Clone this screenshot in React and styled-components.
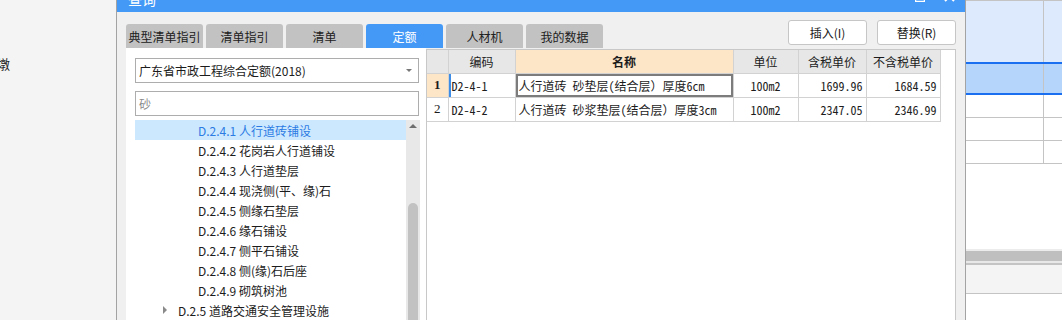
import React from "react";
import styled, { createGlobalStyle } from "styled-components";

const GlobalStyle = createGlobalStyle`
  html, body {
    margin: 0;
    padding: 0;
    width: 1062px;
    height: 320px;
    overflow: hidden;
    background: #f4f4f4;
  }
  body {
    font-family: "Noto Sans CJK SC", "Microsoft YaHei", sans-serif;
    font-size: 12px;
    color: #1c1c1c;
  }
  #root {
    height: 320px;
  }
`;

const tabs = ["典型清单指引", "清单指引", "清单", "定额", "人材机", "我的数据"];

const treeRows = [
  { code: "D.2.4.1", name: "人行道砖铺设", depth: 1, selected: true },
  { code: "D.2.4.2", name: "花岗岩人行道铺设", depth: 1 },
  { code: "D.2.4.3", name: "人行道垫层", depth: 1 },
  { code: "D.2.4.4", name: "现浇侧(平、缘)石", depth: 1 },
  { code: "D.2.4.5", name: "侧缘石垫层", depth: 1 },
  { code: "D.2.4.6", name: "缘石铺设", depth: 1 },
  { code: "D.2.4.7", name: "侧平石铺设", depth: 1 },
  { code: "D.2.4.8", name: "侧(缘)石后座", depth: 1 },
  { code: "D.2.4.9", name: "砌筑树池", depth: 1 },
  { code: "D.2.5", name: "道路交通安全管理设施", depth: 0, collapsed: true },
];

const quotaRows = [
  { no: 1, code: "D2-4-1", name: "人行道砖 砂垫层(结合层）厚度6cm", unit: "100m2", tax: "1699.96", noTax: "1684.59" },
  { no: 2, code: "D2-4-2", name: "人行道砖 砂浆垫层(结合层）厚度3cm", unit: "100m2", tax: "2347.05", noTax: "2346.99" },
];

function App() {
  return (
    <>
      <GlobalStyle />
      <Page>
        <LeftBg>
          <CutText>墩</CutText>
        </LeftBg>

        <Dialog>
          <TitleBar>
            <TitleText>查询</TitleText>
            <TitleIcons>
              <svg width="10" height="10" viewBox="0 0 10 10">
                <rect x="0.5" y="0.5" width="9" height="9" fill="none" stroke="#fff" strokeWidth="1.5" />
              </svg>
              <svg width="11" height="11" viewBox="0 0 11 11">
                <path d="M1 1 L10 10 M10 1 L1 10" stroke="#fff" strokeWidth="2" />
              </svg>
            </TitleIcons>
          </TitleBar>

          <TopRow>
            <Tabs>
              {tabs.map((t) => (
                <Tab key={t} $active={t === "定额"}>
                  {t}
                </Tab>
              ))}
            </Tabs>
            <Actions>
              <ActionButton>插入(I)</ActionButton>
              <ActionButton>替换(R)</ActionButton>
            </Actions>
          </TopRow>

          <Body>
            <LeftPanel>
              <Combo>
                <span>广东省市政工程综合定额(2018)</span>
                <ComboArrow />
              </Combo>
              <SearchBox>砂</SearchBox>
              <TreeArea>
                <TreeList>
                  {treeRows.map((r) => (
                    <TreeRow key={r.code} $depth={r.depth} $selected={r.selected}>
                      <CaretSlot>{r.collapsed && <Caret />}</CaretSlot>
                      <span>
                        {r.code} {r.name}
                      </span>
                    </TreeRow>
                  ))}
                </TreeList>
                <ScrollTrack>
                  <UpArrow />
                  <Thumb />
                </ScrollTrack>
              </TreeArea>
            </LeftPanel>

            <TablePanel>
              <QuotaTable>
                <colgroup>
                  <col style={{ width: 21 }} />
                  <col style={{ width: 67 }} />
                  <col style={{ width: 218 }} />
                  <col style={{ width: 65 }} />
                  <col style={{ width: 68 }} />
                  <col style={{ width: 74 }} />
                </colgroup>
                <thead>
                  <tr>
                    <HeadCell />
                    <HeadCell>编码</HeadCell>
                    <HeadCell $accent>名称</HeadCell>
                    <HeadCell>单位</HeadCell>
                    <HeadCell>含税单价</HeadCell>
                    <HeadCell>不含税单价</HeadCell>
                  </tr>
                </thead>
                <tbody>
                  {quotaRows.map((r) => {
                    const current = r.no === 1;
                    return (
                      <tr key={r.code}>
                        <NoCell $current={current}>{r.no}</NoCell>
                        <Cell $marker={current}>{r.code}</Cell>
                        <Cell $focus={current}>{r.name}</Cell>
                        <Cell $align="center">{r.unit}</Cell>
                        <Cell $align="right">{r.tax}</Cell>
                        <Cell $align="right">{r.noTax}</Cell>
                      </tr>
                    );
                  })}
                </tbody>
              </QuotaTable>
            </TablePanel>
          </Body>
        </Dialog>

        <RightBg>
          <Band $h={62} $bg="#dde9fc" $top>
            <BandCell $split />
            <BandCell />
          </Band>
          <Rule $c="#1a6ff0" $h={2} />
          <Band $h={29} $bg="#b6d5fb">
            <BandCell $split />
            <BandCell />
          </Band>
          <Rule $c="#1a6ff0" $h={2} />
          <Band $h={23} $bg="#fff" $line>
            <BandCell $split />
            <BandCell />
          </Band>
          <Band $h={23} $bg="#fff" $line>
            <BandCell $split />
            <BandCell />
          </Band>
          <Band $h={23} $bg="#fff" $line>
            <BandCell $split />
            <BandCell />
          </Band>
          <Band $h={85} $bg="#fff" />
          <Rule $c="#ececec" $h={2} />
          <Rule $c="#bfbfbf" $h={10} />
          <Rule $c="#e8e8e8" $h={2} />
          <Rule $c="#c4c4c4" $h={2} />
          <Band $h={29} $bg="#f4f4f4" $line />
          <Band $h={30} $bg="#fff" />
        </RightBg>
      </Page>
    </>
  );
}

const Page = styled.div`
  display: flex;
  height: 320px;
  overflow: hidden;
`;

const LeftBg = styled.div`
  width: 116px;
  flex-shrink: 0;
  background: #f4f4f4;
  padding-top: 56px;
  overflow: hidden;
`;

const CutText = styled.div`
  margin-left: -3px;
  font-size: 13px;
  line-height: 16px;
  color: #222;
`;

const Dialog = styled.div`
  width: 848px;
  flex-shrink: 0;
  display: flex;
  flex-direction: column;
  background: #f0f0f0;
  border-left: 1px solid #a3a3a3;
  border-right: 1px solid #a3a3a3;
`;

const TitleBar = styled.div`
  height: 28px;
  margin-top: -16px;
  flex-shrink: 0;
  display: flex;
  align-items: center;
  justify-content: space-between;
  padding: 0 10px 0 11px;
  background: #4499f7;
`;

const TitleText = styled.div`
  color: #fff;
  font-size: 14px;
  line-height: 16px;
  margin-top: 2px;
`;

const TitleIcons = styled.div`
  display: flex;
  align-items: center;
  gap: 19px;
  margin-top: -3px;
`;

const TopRow = styled.div`
  height: 36px;
  flex-shrink: 0;
  display: flex;
  justify-content: space-between;
  align-items: flex-end;
  padding: 0 9px;
`;

const Tabs = styled.div`
  display: flex;
  gap: 3px;
`;

const Tab = styled.div`
  width: 77px;
  height: 24px;
  display: flex;
  align-items: center;
  justify-content: center;
  border-radius: 3px 3px 0 0;
  background: ${(p) => (p.$active ? "#4499f7" : "#c2c2c2")};
  color: ${(p) => (p.$active ? "#fff" : "#202020")};
  font-size: 12px;
`;

const Actions = styled.div`
  align-self: flex-start;
  margin-top: 8px;
  display: flex;
  gap: 10px;
`;

const ActionButton = styled.button`
  width: 79px;
  height: 25px;
  padding: 0;
  background: #fff;
  border: 1px solid #c6c6c6;
  border-radius: 3px;
  font-family: inherit;
  font-size: 12px;
  color: #202020;
`;

const Body = styled.div`
  flex: 1;
  min-height: 0;
  display: flex;
  padding: 0 9px;
`;

const LeftPanel = styled.div`
  width: 300px;
  flex-shrink: 0;
  display: flex;
  flex-direction: column;
  background: #fff;
  padding: 10px 7px 0 9px;
  box-sizing: border-box;
`;

const Combo = styled.div`
  height: 25px;
  box-sizing: border-box;
  border: 1px solid #adadad;
  display: flex;
  align-items: center;
  justify-content: space-between;
  padding: 0 6px 0 3px;
  font-size: 12px;
`;

const ComboArrow = styled.div`
  width: 0;
  height: 0;
  border-left: 3px solid transparent;
  border-right: 3px solid transparent;
  border-top: 3px solid #777;
`;

const SearchBox = styled.div`
  margin-top: 8px;
  height: 25px;
  box-sizing: border-box;
  border: 1px solid #adadad;
  display: flex;
  align-items: center;
  padding-left: 3px;
  color: #8a8a8a;
  font-size: 12px;
`;

const TreeArea = styled.div`
  flex: 1;
  min-height: 0;
  margin-top: 4px;
  margin-right: -1px;
  display: flex;
`;

const TreeList = styled.div`
  flex: 1;
`;

const TreeRow = styled.div`
  height: 20px;
  display: flex;
  align-items: center;
  padding-left: ${(p) => 28 + p.$depth * 20}px;
  background: ${(p) => (p.$selected ? "#cce8ff" : "transparent")};
  color: ${(p) => (p.$selected ? "#2b7be3" : "#1c1c1c")};
  font-size: 12px;
  white-space: nowrap;
`;

const CaretSlot = styled.div`
  width: 15px;
  display: flex;
  align-items: center;
`;

const Caret = styled.div`
  width: 0;
  height: 0;
  border-top: 4px solid transparent;
  border-bottom: 4px solid transparent;
  border-left: 4px solid #8a8a8a;
`;

const ScrollTrack = styled.div`
  width: 14px;
  display: flex;
  flex-direction: column;
  align-items: center;
  background: #e8e8e8;
`;

const UpArrow = styled.div`
  margin-top: 4px;
  width: 0;
  height: 0;
  border-left: 4px solid transparent;
  border-right: 4px solid transparent;
  border-bottom: 4px solid #6e6e6e;
`;

const Thumb = styled.div`
  margin-top: 75px;
  flex: 1;
  width: 10px;
  border-radius: 5px 5px 0 0;
  background: #c2c2c2;
`;

const TablePanel = styled.div`
  flex: 1;
  margin-top: 1px;
  background: #fff;
  border: 1px solid #c8c8c8;
  border-bottom: none;
`;

const QuotaTable = styled.table`
  border-collapse: collapse;
  table-layout: fixed;
  width: 513px;
  font-size: 12px;
`;

const HeadCell = styled.th`
  height: 23px;
  padding: 0;
  box-sizing: border-box;
  border: 1px solid #d2d2d2;
  border-top: none;
  background: ${(p) => (p.$accent ? "#fde6c8" : "#e7e7e7")};
  font-weight: ${(p) => (p.$accent ? 700 : 400)};
  font-size: 12px;
  color: #1c1c1c;
  &:first-child {
    border-left: none;
  }
`;

const monoStack = `"Noto Sans Mono CJK SC", "Noto Sans CJK SC", monospace`;

const NoCell = styled.td`
  height: 23px;
  padding: 0;
  border: 1px solid #d2d2d2;
  border-left: none;
  text-align: center;
  font-family: "Liberation Serif", serif;
  font-size: 13px;
  font-weight: ${(p) => (p.$current ? 700 : 400)};
  background: ${(p) => (p.$current ? "#fde6c8" : "#fff")};
`;

const Cell = styled.td`
  height: 23px;
  padding: 0 3px;
  border: 1px solid #d2d2d2;
  font-family: ${monoStack};
  font-size: 12px;
  white-space: nowrap;
  overflow: hidden;
  text-align: ${(p) => p.$align || "left"};
  box-shadow: ${(p) =>
    p.$focus
      ? "inset 0 0 0 2px #7c7c7c"
      : p.$marker
      ? "inset 2px 0 0 #3d8de6"
      : "none"};
`;

const RightBg = styled.div`
  flex: 1;
  display: flex;
  flex-direction: column;
  background: #fff;
`;

const Band = styled.div`
  height: ${(p) => p.$h}px;
  flex-shrink: 0;
  display: flex;
  box-sizing: border-box;
  background: ${(p) => p.$bg};
  border-top: ${(p) => (p.$top ? "1px solid #c4c4c4" : "none")};
  border-bottom: ${(p) => (p.$line ? "1px solid #c4c4c4" : "none")};
`;

const BandCell = styled.div`
  width: ${(p) => (p.$split ? "77px" : "auto")};
  flex: ${(p) => (p.$split ? "none" : "1")};
  border-right: ${(p) => (p.$split ? "1px solid #c4c4c4" : "none")};
`;

const Rule = styled.div`
  height: ${(p) => p.$h}px;
  flex-shrink: 0;
  background: ${(p) => p.$c};
`;

export default App;
